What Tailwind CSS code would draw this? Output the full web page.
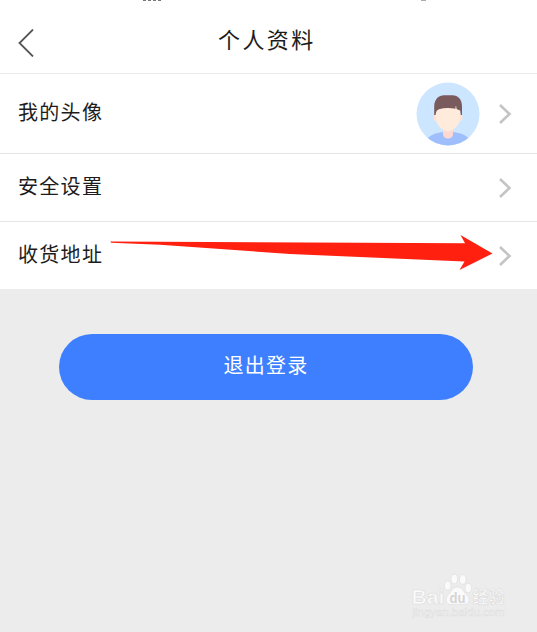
<!DOCTYPE html>
<html lang="zh-CN">
<head>
    <meta charset="UTF-8">
    <meta name="viewport" content="width=device-width, initial-scale=1.0">
    <title>个人资料</title>
    <script src="https://cdn.jsdelivr.net/npm/@tailwindcss/browser@4"></script>
</head>
<body class="relative h-[632px] overflow-hidden bg-[#ececec] font-['Liberation_Sans','Noto_Sans_CJK_SC',sans-serif] text-[#1c1c1c]">
    <!-- Header -->
    <header class="relative flex h-[74px] items-center border-b border-[#ebebeb] bg-white px-[18px] pt-3">
        <!-- Bottom edge of the status bar -->
        <div class="absolute inset-x-0 top-0 flex h-[2px] justify-between pr-[111px] pl-[143px]">
            <span class="h-px w-[18px] border-t border-dashed border-[#777777]"></span>
            <span class="h-px w-[5px] bg-[#aaaaaa]"></span>
        </div>
        <svg class="h-7 w-4" viewBox="0 0 16 28" fill="none" stroke="#555555" stroke-width="1.8">
            <path d="M15 .5L1.5 14L15 27.5" />
        </svg>
        <h1 class="ml-[184px] pb-[3px] text-[22px] leading-8 tracking-[2.4px]">个人资料</h1>
    </header>

    <!-- Settings list -->
    <main>
        <div class="flex h-20 items-center border-b border-[#e5e5e5] bg-white pr-[25px] pl-[18px]">
            <span class="pb-[2px] text-[20px] leading-8 tracking-[1.3px]">我的头像</span>
            <svg class="ml-auto h-16 w-16" viewBox="0 0 64 64">
                <defs>
                    <clipPath id="avatar"><circle cx="32" cy="32" r="31.5" /></clipPath>
                </defs>
                <g clip-path="url(#avatar)">
                    <rect width="64" height="64" fill="#cce6ff" />
                    <path d="M8 60C14 52 21 50.5 28 50H37C45 51 51 53 56 60V64H8Z" fill="#9fbffc" />
                    <path d="M27 45H37V52C37 58 27 58 27 52Z" fill="#ffd8d1" />
                    <ellipse cx="19.5" cy="35.5" rx="2" ry="3.2" fill="#ffe0d5" />
                    <ellipse cx="44.5" cy="35.5" rx="2" ry="3.2" fill="#ffe0d5" />
                    <path d="M19.5 25H44.5V35C44.5 43 37 49.5 32 49.5S19.5 43 19.5 35Z" fill="#ffebdc" />
                    <path d="M18.2 33V25C18.2 16.5 23 13.5 28 13.2H36C42 13 46 17.5 46 24V33H44.8L44.2 28.5L39.5 26.8C34 25.8 28 25.8 23 27.2Q20 28 19.6 33Z" fill="#795b5d" />
                    <path d="M39.5 24.5V28L41.5 28.3Q39.8 26.8 40.2 24Z" fill="#ffebdc" />
                </g>
            </svg>
            <svg class="ml-[18px] h-5 w-3.5" viewBox="0 0 14 20" fill="none" stroke="#c4c4c4" stroke-width="2.6">
                <path d="M2 1L11.5 10L2 19" />
            </svg>
        </div>
        <div class="flex h-[68px] items-center justify-between border-b border-[#e5e5e5] bg-white pr-[25px] pl-[18px]">
            <span class="pb-px text-[20px] leading-8 tracking-[1.3px]">安全设置</span>
            <svg class="h-5 w-3.5" viewBox="0 0 14 20" fill="none" stroke="#c4c4c4" stroke-width="2.6">
                <path d="M2 1L11.5 10L2 19" />
            </svg>
        </div>
        <div class="flex h-[67px] items-center justify-between bg-white pr-[25px] pl-[18px]">
            <span class="pb-px text-[20px] leading-8 tracking-[1.3px]">收货地址</span>
            <svg class="h-5 w-3.5" viewBox="0 0 14 20" fill="none" stroke="#c4c4c4" stroke-width="2.6">
                <path d="M2 1L11.5 10L2 19" />
            </svg>
        </div>
        <button class="mt-[45px] ml-[59px] flex h-[66px] w-[414px] items-center justify-center rounded-full bg-[#3d7fff] pb-[2px] text-[20px] leading-8 tracking-[1.3px] text-white">退出登录</button>
    </main>

    <!-- Arrow pointing at the address row -->
    <svg class="absolute top-[234px] left-[110px] h-9 w-96" viewBox="0 0 384 36">
        <path d="M.5 7.5L355 9.3L350.5 1L382.5 19.5L349.5 36L354.5 27.5L180 20L50 10.8L1 8.8Z" fill="#ff2010" />
    </svg>

    <!-- Watermark -->
    <svg class="absolute top-[572px] left-[410px] h-12 w-[98px]" viewBox="0 0 98 48" fill="#fafafa" stroke="#dcdcdc" stroke-width=".6">
        <text x="1.5" y="31.5" font-size="21" font-weight="bold" textLength="33" lengthAdjust="spacingAndGlyphs">Bai</text>
        <ellipse cx="37.7" cy="13.5" rx="3.3" ry="4.5" />
        <ellipse cx="44.3" cy="7" rx="3.3" ry="4.7" />
        <ellipse cx="52.8" cy="7.5" rx="3.3" ry="4.7" />
        <ellipse cx="58.3" cy="16" rx="3.3" ry="4.5" />
        <path d="M47.5 15C52 15 53 19 56.5 22.5C61 27 59 32.5 54 32.5C50 32.5 45 32 41 32.5C36 33 34.5 26.5 38.5 22.5C42 19 43 15 47.5 15Z" />
        <text x="39.5" y="30.5" font-size="14" font-weight="bold" fill="#d5d5d5" stroke="none" textLength="16" lengthAdjust="spacingAndGlyphs">du</text>
        <text x="62.5" y="31" font-size="17" font-weight="bold" textLength="32" lengthAdjust="spacingAndGlyphs">经验</text>
        <text x="2.5" y="43.5" font-size="10" fill="#f5f5f5" stroke-width=".4" textLength="92" lengthAdjust="spacingAndGlyphs">jingyan.baidu.com</text>
    </svg>
</body>
</html>
